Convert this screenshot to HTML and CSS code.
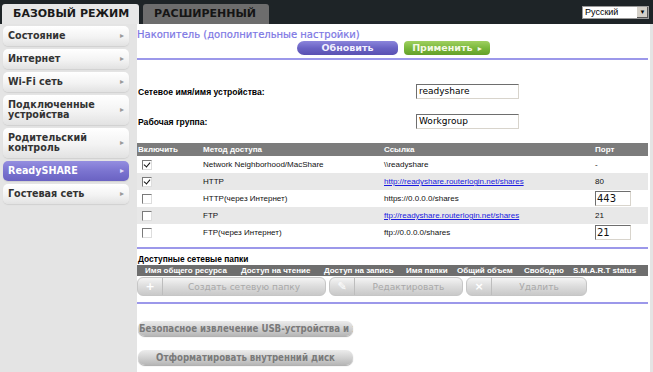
FILE: index.html
```html
<!DOCTYPE html>
<html lang="ru">

<head>
  <meta charset="UTF-8">
  <title>Накопитель (дополнительные настройки)</title>
  <link rel="stylesheet" href="styles.css">
</head>

<body>
  <div class="topbar">
    <div class="tab tab-active">БАЗОВЫЙ РЕЖИМ</div>
    <div class="tab tab-off">РАСШИРЕННЫЙ</div>
    <div class="lang">
      <span class="lang-text">Русский</span>
      <span class="lang-btn">&#9660;</span>
    </div>
  </div>

  <div class="main">
    <div class="sidebar">
      <div class="nav-item"><span>Состояние</span><span class="arr">&#9656;</span></div>
      <div class="nav-item"><span>Интернет</span><span class="arr">&#9656;</span></div>
      <div class="nav-item"><span>Wi-Fi сеть</span><span class="arr">&#9656;</span></div>
      <div class="nav-item double"><span>Подключенные<br>устройства</span><span class="arr">&#9656;</span></div>
      <div class="nav-item double"><span>Родительский<br>контроль</span><span class="arr">&#9656;</span></div>
      <div class="nav-item active"><span>ReadySHARE</span><span class="arr">&#9656;</span></div>
      <div class="nav-item"><span>Гостевая сеть</span><span class="arr">&#9656;</span></div>
    </div>

    <div class="content">
      <div class="title">Накопитель (дополнительные настройки)</div>
      <div class="actions">
        <div class="btn-refresh">Обновить</div>
        <div class="btn-apply">Применить <span class="tri">&#9656;</span></div>
      </div>
      <div class="rule"></div>

      <div class="form">
        <div class="form-row">
          <span class="label">Сетевое имя/имя устройства:</span>
          <span class="field">readyshare</span>
        </div>
        <div class="form-row">
          <span class="label">Рабочая группа:</span>
          <span class="field">Workgroup</span>
        </div>
      </div>

      <div class="access">
        <div class="acc-row acc-head">
          <span>Включить</span><span>Метод доступа</span><span>Ссылка</span><span>Порт</span>
        </div>
        <div class="acc-row">
          <span><i class="cb checked"></i></span>
          <span>Network Neighborhood/MacShare</span>
          <span>\\readyshare</span>
          <span>-</span>
        </div>
        <div class="acc-row alt">
          <span><i class="cb checked"></i></span>
          <span>HTTP</span>
          <span><a href="#">http://readyshare.routerlogin.net/shares</a></span>
          <span>80</span>
        </div>
        <div class="acc-row">
          <span><i class="cb"></i></span>
          <span>HTTP(через Интернет)</span>
          <span>https://0.0.0.0/shares</span>
          <span><span class="port">443</span></span>
        </div>
        <div class="acc-row alt">
          <span><i class="cb"></i></span>
          <span>FTP</span>
          <span><a href="#">ftp://readyshare.routerlogin.net/shares</a></span>
          <span>21</span>
        </div>
        <div class="acc-row">
          <span><i class="cb"></i></span>
          <span>FTP(через Интернет)</span>
          <span>ftp://0.0.0.0/shares</span>
          <span><span class="port">21</span></span>
        </div>
      </div>
      <div class="rule rule-table"></div>

      <div class="sub-title">Доступные сетевые папки</div>
      <div class="folders-head">
        <span class="c1">Имя общего ресурса</span>
        <span class="c2">Доступ на чтение</span>
        <span class="c3">Доступ на запись</span>
        <span class="c4">Имя папки</span>
        <span class="c5">Общий объем</span>
        <span class="c6">Свободно</span>
        <span class="c7">S.M.A.R.T status</span>
      </div>
      <div class="folder-btns">
        <div class="fbtn fbtn-create"><span class="ico">+</span><span class="ftxt">Создать сетевую папку</span></div>
        <div class="fbtn fbtn-edit"><span class="ico">&#9998;</span><span class="ftxt">Редактировать</span></div>
        <div class="fbtn fbtn-del"><span class="ico">&#215;</span><span class="ftxt">Удалить</span></div>
      </div>
      <div class="rule rule-folders"></div>

      <div class="usb-btn usb-eject"><span>Безопасное извлечение USB-устройства и жесткого диска</span></div>
      <div class="usb-btn usb-format"><span>Отформатировать внутренний диск</span></div>
    </div>
  </div>
</body>

</html>
```

FILE: styles.css
```css
html,
body {
  margin: 0;
  padding: 0;
  background: #e4e4e4;
  overflow: hidden;
}

body {
  width: 653px;
  height: 372px;
  font-family: "Liberation Sans", Arial, sans-serif;
}

/* top bar */
.topbar {
  height: 24px;
  background: #1e2427;
  display: flex;
  align-items: flex-end;
  padding-left: 2px;
  gap: 4px;
  box-sizing: border-box;
}

.tab {
  height: 20px;
  line-height: 20px;
  font-family: "DejaVu Sans", Verdana, sans-serif;
  font-weight: bold;
  font-size: 11px;
  border-radius: 3px 3px 0 0;
  box-sizing: border-box;
  white-space: nowrap;
  overflow: hidden;
}

.tab-active {
  width: 137px;
  background: #e7e7e7;
  color: #1a1a1a;
  padding-left: 11px;
}

.tab-off {
  width: 126px;
  background: #6d6d6d;
  color: #151515;
  padding-left: 11px;
}

.lang {
  margin-left: auto;
  margin-right: 4px;
  align-self: center;
  width: 67px;
  height: 13px;
  background: #fff;
  border: 1px solid #9a9a9a;
  box-sizing: border-box;
  display: flex;
  justify-content: space-between;
  font-size: 9px;
  line-height: 11px;
  color: #000;
}

.lang-text {
  padding-left: 2px;
}

.lang-btn {
  width: 11px;
  background: #d4d0c8;
  border-left: 1px solid #fff;
  box-shadow: inset -1px -1px 0 #555;
  font-size: 6px;
  text-align: center;
  line-height: 11px;
}

/* layout */
.main {
  display: flex;
  height: 348px;
}

.sidebar {
  width: 135px;
  padding: 2px 0 0 3px;
  box-sizing: border-box;
  display: flex;
  flex-direction: column;
  gap: 3px;
}

.nav-item {
  width: 126px;
  height: 20px;
  box-sizing: border-box;
  padding: 0 5px 0 5px;
  border-radius: 5px;
  background: linear-gradient(#ffffff, #f3f3f3 55%, #e2e2e2);
  box-shadow: 0 1px 1px #d0d0d0;
  display: flex;
  align-items: center;
  justify-content: space-between;
  font-family: "DejaVu Sans", Verdana, sans-serif;
  font-weight: bold;
  font-size: 9.6px;
  line-height: 10px;
  color: #333;
}

.nav-item.double {
  height: 30px;
}

.nav-item .arr {
  color: #9a9a9a;
  font-size: 8px;
}

.nav-item.active {
  background: linear-gradient(#948ee0, #7b74d0 50%, #6a62c2);
  color: #fff;
}

.nav-item.active .arr {
  color: #e0dff8;
}

.content {
  width: 513px;
  margin-left: 2px;
  background: #fff;
  display: flex;
  flex-direction: column;
  padding-right: 2px;
  box-sizing: border-box;
}

.title {
  color: #7c76e4;
  font-family: "DejaVu Sans", Verdana, sans-serif;
  font-size: 10px;
  line-height: 13px;
  padding-top: 4px;
  -webkit-text-stroke: 0.2px #7c76e4;
}

.actions {
  display: flex;
  gap: 6px;
  padding-left: 160px;
}

.btn-refresh,
.btn-apply {
  height: 14px;
  line-height: 14px;
  font-family: "DejaVu Sans", Verdana, sans-serif;
  font-weight: bold;
  font-size: 9.5px;
  text-align: center;
  box-sizing: border-box;
}

.btn-refresh {
  width: 101px;
  border-radius: 7px 5px 5px 7px;
  background: linear-gradient(#8b85dc, #6a63c4 50%, #5950b2);
  color: #f2f0ff;
}

.btn-apply {
  width: 86px;
  border-radius: 4px;
  background: linear-gradient(#a0d060, #7ab83c 50%, #64a02a);
  color: #f4f8e4;
}

.btn-apply .tri {
  font-size: 8px;
  margin-left: 2px;
}

.rule {
  height: 2px;
  background: #9c98ea;
  margin-top: 3px;
}

/* form */
.form {
  padding-top: 24px;
  display: flex;
  flex-direction: column;
  gap: 15px;
}

.form-row {
  display: flex;
  align-items: center;
  height: 15px;
}

.label {
  width: 278px;
  padding-left: 1px;
  font-size: 8.6px;
  font-weight: bold;
  color: #000;
}

.field {
  width: 103px;
  height: 15px;
  box-sizing: border-box;
  border: 1px solid #d8d4cc;
  border-top-color: #6e6e6e;
  border-left-color: #6e6e6e;
  font-family: "DejaVu Sans", Verdana, sans-serif;
  font-size: 9px;
  line-height: 13px;
  padding-left: 2px;
  color: #000;
}

/* access table */
.access {
  margin-top: 14px;
  font-size: 8px;
}

.acc-row {
  display: grid;
  grid-template-columns: 64px 181px 211px 1fr;
  height: 17px;
  align-items: center;
  color: #111;
}

.acc-row > span {
  padding-left: 2px;
  display: flex;
  align-items: center;
}

.acc-row.alt {
  background: #e8e8e8;
}

.acc-head {
  height: 13px;
  background: #7c7c7c;
  color: #fff;
  font-weight: bold;
}

.acc-head > span:first-child {
  padding-left: 1px;
}

.acc-row a {
  color: #1a1ae0;
  text-decoration: underline;
}

.cb {
  width: 10px;
  height: 10px;
  margin-left: 3px;
  box-sizing: border-box;
  background: #fff;
  border: 1px solid #ddd;
  border-top-color: #7a7a7a;
  border-left-color: #7a7a7a;
  position: relative;
}

.cb.checked::after {
  content: "";
  position: absolute;
  left: 2px;
  top: 0px;
  width: 3px;
  height: 5px;
  border: solid #111;
  border-width: 0 1.5px 1.5px 0;
  transform: rotate(40deg);
}

.port {
  display: block;
  width: 36px;
  height: 15px;
  box-sizing: border-box;
  border: 1px solid #d8d4cc;
  border-top-color: #6e6e6e;
  border-left-color: #6e6e6e;
  font-family: "DejaVu Sans", Verdana, sans-serif;
  font-size: 10px;
  line-height: 13px;
  padding-left: 1px;
  background: #fff;
}

.rule-table {
  margin-top: 6px;
}

/* folders */
.sub-title {
  margin-top: 5px;
  font-size: 8.4px;
  font-weight: bold;
  color: #000;
  padding-left: 1px;
  line-height: 11px;
}

.folders-head {
  height: 11px;
  background: #6e6e6e;
  color: #fff;
  font-size: 8px;
  font-weight: bold;
  line-height: 11px;
  position: relative;
  white-space: nowrap;
}

.folders-head span {
  position: absolute;
  top: 0;
}

.folders-head .c1 { left: 8px; }
.folders-head .c2 { left: 104px; }
.folders-head .c3 { left: 187px; }
.folders-head .c4 { left: 269px; }
.folders-head .c5 { left: 320px; }
.folders-head .c6 { left: 387px; }
.folders-head .c7 { left: 436px; }

.folder-btns {
  display: flex;
  gap: 3px;
  margin-top: 1px;
}

.fbtn {
  height: 19px;
  box-sizing: border-box;
  border-radius: 6px;
  border: 1px solid #c6c6c6;
  background: linear-gradient(#f4f4f4, #dcdcdc 50%, #c9c9c9);
  display: flex;
  align-items: center;
  font-family: "DejaVu Sans", Verdana, sans-serif;
  font-size: 9px;
  color: #a8a8a8;
}

.fbtn .ico {
  width: 24px;
  text-align: center;
  color: #fff;
  font-weight: bold;
  font-size: 11px;
  border-right: 1px solid #bdbdbd;
  height: 17px;
  line-height: 17px;
}

.fbtn .ftxt {
  flex: 1;
  text-align: center;
}

.fbtn-create { width: 189px; }
.fbtn-edit { width: 134px; }
.fbtn-del { width: 121px; }

.rule-folders {
  margin-top: 6px;
}

.usb-btn {
  width: 215px;
  height: 15px;
  margin-left: 1px;
  border-radius: 7px;
  background: linear-gradient(#ececec, #d2d2d2 50%, #b6b6b6);
  box-shadow: 0 1px 1px #aaa;
  font-family: "DejaVu Sans Condensed", "DejaVu Sans", sans-serif;
  font-weight: bold;
  font-size: 9.6px;
  line-height: 15px;
  color: #7a7a7a;
  white-space: nowrap;
  overflow: hidden;
}

.usb-eject {
  margin-top: 17px;
}

.usb-eject span {
  padding-left: 1px;
}

.usb-format {
  margin-top: 14px;
  text-align: center;
}
```
